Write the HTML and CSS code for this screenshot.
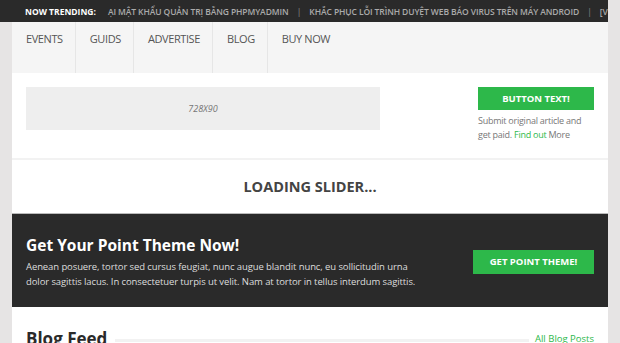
FILE: index.html
```html
<!DOCTYPE html>
<html lang="vi">
<head>
    <meta charset="UTF-8">
    <meta name="viewport" content="width=device-width, initial-scale=1.0">
    <title>Point Theme</title>
    <link rel="stylesheet" href="styles.css">
</head>
<body>
    <div class="trending">
        <strong>NOW TRENDING:</strong>
        <span class="trend-list">ẠI MẬT KHẨU QUẢN TRỊ BẰNG PHPMYADMIN <i>|</i> KHẮC PHỤC LỖI TRÌNH DUYỆT WEB BÁO VIRUS TRÊN MÁY ANDROID <i>|</i> [V</span>
    </div>

    <div class="wrap">
        <ul class="nav">
            <li>EVENTS</li>
            <li>GUIDS</li>
            <li>ADVERTISE</li>
            <li>BLOG</li>
            <li class="last">BUY NOW</li>
        </ul>

        <div class="header">
            <div class="ad">728X90</div>
            <div class="submit">
                <a class="btn small">BUTTON TEXT!</a>
                <p>Submit original article and get paid. <span class="green">Find out</span> More</p>
            </div>
        </div>

        <div class="slider">LOADING SLIDER...</div>

        <div class="promo">
            <div class="promo-text">
                <h2>Get Your Point Theme Now!</h2>
                <p>Aenean posuere, tortor sed cursus feugiat, nunc augue blandit nunc, eu sollicitudin urna dolor sagittis lacus. In consectetuer turpis ut velit. Nam at tortor in tellus interdum sagittis.</p>
            </div>
            <a class="btn big">GET POINT THEME!</a>
        </div>

        <div class="feed">
            <h3>Blog Feed</h3>
            <span class="rule"></span>
            <a class="green all">All Blog Posts</a>
        </div>
    </div>
</body>
</html>
```

FILE: styles.css
```css
body {
    margin: 0;
    background-color: #e6e4e4;
    font-family: "Open Sans", Arial, sans-serif;
    color: #555;
}
.trending {
    width: 583px;
    height: 22px;
    padding-left: 25px;
    background-color: #2a2a2a;
    display: flex;
    align-items: center;
    font-size: 8.5px;
    white-space: nowrap;
    overflow: hidden;
}
.trending strong {
    color: #fff;
    margin-right: 12px;
    font-weight: 700;
}
.trend-list {
    color: #aaa;
    font-weight: 600;
    letter-spacing: -0.1px;
}
.trend-list i {
    font-style: normal;
    color: #777;
    margin: 0 6px;
}
.wrap {
    margin-left: 12px;
    width: 596px;
    background-color: #fff;
}
.nav {
    list-style: none;
    margin: 0;
    padding: 0;
    height: 51px;
    display: flex;
    background-color: #f5f5f5;
}
.nav li {
    padding: 9px 12px 0 14px;
    border-right: 1px solid #e6e6e6;
    font-size: 11px;
    font-weight: 400;
    color: #555;
    letter-spacing: -0.4px;
}
.nav li.last {
    border-right: none;
}
.header {
    display: flex;
    justify-content: space-between;
    padding: 14px 14px 0 14px;
    height: 71px;
    border-bottom: 2px solid #f2f2f2;
}
.ad {
    width: 354px;
    height: 43px;
    background-color: #eee;
    display: flex;
    align-items: center;
    justify-content: center;
    font-style: italic;
    font-size: 9px;
    color: #777;
}
.submit {
    width: 116px;
}
.btn {
    display: flex;
    align-items: center;
    justify-content: center;
    background-color: #2db84a;
    color: #fff;
    font-weight: 700;
    font-size: 9.5px;
}
.btn.small {
    height: 23px;
}
.submit p {
    margin: 4px 0 0 0;
    font-size: 9px;
    line-height: 14px;
    color: #777;
    letter-spacing: -0.25px;
}
.green {
    color: #2db84a;
}
.slider {
    height: 53px;
    display: flex;
    align-items: center;
    justify-content: center;
    font-weight: 700;
    font-size: 14.5px;
    color: #444;
}
.promo {
    background-color: #2a2a2a;
    border-top: 1px solid #bbb;
    height: 93px;
    display: flex;
    align-items: center;
    justify-content: space-between;
    padding: 0 14px;
}
.promo-text {
    width: 390px;
    margin-top: 2px;
}
.promo h2 {
    margin: 0 0 3px 0;
    color: #fff;
    font-size: 15.5px;
    font-weight: 700;
}
.promo p {
    margin: 0;
    font-size: 9.5px;
    line-height: 15px;
    color: #ddd;
    letter-spacing: -0.1px;
}
.btn.big {
    width: 121px;
    height: 24px;
    margin-top: 2px;
}
.feed {
    display: flex;
    align-items: center;
    padding: 22px 14px 0 14px;
    height: 14px;
}
.feed h3 {
    margin: 0;
    font-size: 17px;
    font-weight: 700;
    color: #2a2a2a;
    line-height: 20px;
    padding-top: 6px;
}
.rule {
    flex: 1;
    height: 3px;
    background-color: #f2f2f2;
    margin: 8px 6px 0 8px;
}
.all {
    font-size: 9.5px;
    margin-top: 4px;
}
```
